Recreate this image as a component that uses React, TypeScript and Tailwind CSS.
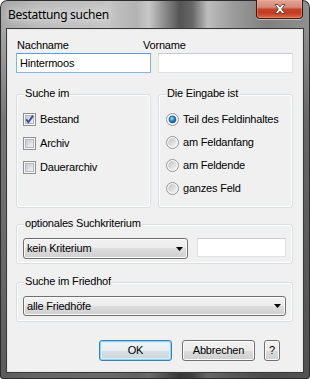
import React from "react";

function CheckBox({ checked }: { checked?: boolean }) {
  return (
    <svg width="13" height="13" viewBox="0 0 13 13" className="shrink-0">
      <defs>
        <linearGradient id="cbInner" x1="0" y1="0" x2="1" y2="1">
          <stop offset="0" stopColor="#c3c7cd" />
          <stop offset="1" stopColor="#f4f4f4" />
        </linearGradient>
      </defs>
      <rect x="0.5" y="0.5" width="12" height="12" fill="#f7f7f7" stroke="#8e8f8f" />
      <rect x="2.5" y="2.5" width="8" height="8" fill="url(#cbInner)" stroke="#b3b8be" />
      {checked && (
        <path d="M3.2 6.2 L5.4 9.2 L10 2.6" stroke="#34509c" strokeWidth="1.9" fill="none" strokeLinejoin="round" />
      )}
    </svg>
  );
}

function Radio({ checked }: { checked?: boolean }) {
  return (
    <svg width="13" height="13" viewBox="0 0 13 13" className="shrink-0">
      <defs>
        <linearGradient id="rbInner" x1="0" y1="0" x2="1" y2="1">
          <stop offset="0" stopColor="#bfc2c6" />
          <stop offset="1" stopColor="#f6f6f6" />
        </linearGradient>
        <radialGradient id="rbDot" cx="0.4" cy="0.35" r="0.75">
          <stop offset="0" stopColor="#a8e4ff" />
          <stop offset="0.45" stopColor="#2b8ad3" />
          <stop offset="1" stopColor="#0f477f" />
        </radialGradient>
      </defs>
      <circle cx="6.5" cy="6.5" r="6" fill="#f8f8f8" stroke="#959595" />
      <circle cx="6.5" cy="6.5" r="4.4" fill="url(#rbInner)" />
      {checked && <circle cx="6.5" cy="6.5" r="3.4" fill="url(#rbDot)" stroke="#1d4f86" strokeWidth="0.6" />}
    </svg>
  );
}

function Arrow() {
  return (
    <svg width="7" height="4" viewBox="0 0 7 4" className="shrink-0">
      <path d="M0 0 H7 L3.5 4 Z" fill="#000" />
    </svg>
  );
}

function Group({ label, className, children }: { label: string; className: string; children?: React.ReactNode }) {
  return (
    <div className={"relative rounded-[3px] border border-[#d5dfe5] shadow-[inset_0_0_0_1px_#ffffff] " + className}>
      <span className="absolute left-[7px] top-[-8px] px-[1px] bg-[#f0f0f0] leading-[13px] whitespace-nowrap">{label}</span>
      {children}
    </div>
  );
}

export default function App() {
  return (
    <div className="w-[310px] h-[379px] overflow-hidden rounded-t-[7px] rounded-b-[3px] flex flex-col text-[11px] leading-[13px] text-black font-['Liberation_Sans',Arial,sans-serif] shadow-[inset_0_0_0_1px_#2c2c2c] bg-[linear-gradient(180deg,rgba(0,0,0,0)_0px,rgba(0,0,0,0)_30px,rgba(30,30,30,0.35)_120px,rgba(30,30,30,0.55)_100%),linear-gradient(90deg,#a4a4a4_0%,#bababa_12%,#c4c4c4_35%,#b2b2b2_44%,#c8c8c8_48%,#8c8c8c_53%,#555555_58%,#666666_62%,#bdbdbd_67%,#9c9c9c_75%,#808080_86%,#8f8f8f_100%)]">
      {/* title bar */}
      <div className="h-[30px] shrink-0 flex items-start pl-[8px] pr-[7px]">
        <span className="mt-[6px] leading-[18px] text-[12px] tracking-[-0.3px] font-['Noto_Sans',sans-serif] text-black [text-shadow:0_0_8px_rgba(255,255,255,0.95),0_0_14px_rgba(255,255,255,0.85)]">
          Bestattung suchen
        </span>
        <div className="ml-auto w-[47px] h-[19px] rounded-b-[4px] border border-t-0 border-[#3b1810] shadow-[0_1px_0_rgba(255,255,255,0.45),inset_0_0_0_1px_rgba(255,190,170,0.35)] bg-[linear-gradient(180deg,#e2a595_0%,#d58a77_40%,#c1432a_52%,#c23b22_72%,#dd6a44_100%)] flex items-center justify-center">
          <svg width="12" height="10" viewBox="0 0 12 10">
            <path
              d="M1 0.5 H4 L6 3 L8 0.5 H11 L7.6 5 L11 9.5 H8 L6 7 L4 9.5 H1 L4.4 5 Z"
              fill="#ffffff"
              stroke="#5a2a20"
              strokeWidth="0.8"
              strokeLinejoin="round"
            />
          </svg>
        </div>
      </div>

      {/* client area */}
      <div className="ml-[8px] w-[294px] h-[341px] shrink-0 bg-[#f0f0f0] tracking-[-0.2px] shadow-[0_0_0_1px_#e6e6e6,0_0_0_2px_#3a3a3a] flex flex-col pl-[8px] pr-[9px] pt-[9px]">
        <div className="flex h-[13px]">
          <span className="w-[127px] pl-[1px]">Nachname</span>
          <span>Vorname</span>
        </div>
        <div className="mt-[1px] flex gap-[7px]">
          <div className="w-[135px] h-[20px] border border-[#7eb4ea] border-t-[#569de5] bg-white flex items-center pl-[3px]">
            Hintermoos
          </div>
          <div className="w-[135px] h-[20px] border border-[#dde2e8] border-t-[#c9ccd2] bg-white" />
        </div>

        <div className="mt-[21px] flex gap-[7px]">
          <Group label="Suche im" className="w-[135px] h-[114px] flex flex-col pt-[18px] pl-[6px] gap-[11px]">
            <div className="flex items-center h-[13px] gap-[4px]">
              <CheckBox checked />
              <span>Bestand</span>
            </div>
            <div className="flex items-center h-[13px] gap-[4px]">
              <CheckBox />
              <span>Archiv</span>
            </div>
            <div className="flex items-center h-[13px] gap-[4px]">
              <CheckBox />
              <span>Dauerarchiv</span>
            </div>
          </Group>
          <Group label="Die Eingabe ist" className="w-[135px] h-[114px] flex flex-col pt-[18px] pl-[7px] gap-[10px]">
            <div className="flex items-center h-[13px] gap-[4px]">
              <Radio checked />
              <span>Teil des Feldinhaltes</span>
            </div>
            <div className="flex items-center h-[13px] gap-[4px]">
              <Radio />
              <span>am Feldanfang</span>
            </div>
            <div className="flex items-center h-[13px] gap-[4px]">
              <Radio />
              <span>am Feldende</span>
            </div>
            <div className="flex items-center h-[13px] gap-[4px]">
              <Radio />
              <span>ganzes Feld</span>
            </div>
          </Group>
        </div>

        <Group label="optionales Suchkriterium" className="mt-[16px] h-[40px] flex items-start pt-[13px] pl-[6px] gap-[9px]">
          <div className="w-[165px] h-[21px] rounded-[3px] border border-[#707070] shadow-[inset_0_0_0_1px_#fbfbfb] bg-[linear-gradient(180deg,#f2f2f2_0%,#ebebeb_50%,#dddddd_50%,#cfcfcf_100%)] flex items-center pl-[3px] pr-[4px]">
            <span className="flex-1">kein Kriterium</span>
            <Arrow />
          </div>
          <div className="w-[89px] h-[19px] border border-[#dde2e8] border-t-[#c9ccd2] bg-white" />
        </Group>

        <Group label="Suche im Friedhof" className="mt-[18px] h-[40px] flex items-start pt-[13px] pl-[6px]">
          <div className="w-[263px] h-[20px] rounded-[3px] border border-[#707070] shadow-[inset_0_0_0_1px_#fbfbfb] bg-[linear-gradient(180deg,#f2f2f2_0%,#ebebeb_50%,#dddddd_50%,#cfcfcf_100%)] flex items-center pl-[3px] pr-[4px]">
            <span className="flex-1">alle Friedhöfe</span>
            <Arrow />
          </div>
        </Group>

        <div className="mt-[18px] flex justify-end pr-[13px]">
          <div className="w-[73px] h-[21px] rounded-[3px] border border-[#3c7fb1] shadow-[inset_0_0_0_1px_#8fd3f5,inset_0_0_0_2px_#d6f1fc] bg-[linear-gradient(180deg,#f0f4f6_0%,#e8eef1_50%,#d8e0e5_50%,#cbd4da_100%)] flex items-center justify-center">
            OK
          </div>
          <div className="ml-[10px] w-[73px] h-[21px] rounded-[3px] border border-[#707070] shadow-[inset_0_0_0_1px_#fbfbfb] bg-[linear-gradient(180deg,#f2f2f2_0%,#ebebeb_50%,#dddddd_50%,#cfcfcf_100%)] flex items-center justify-center">
            Abbrechen
          </div>
          <div className="ml-[9px] w-[16px] h-[21px] rounded-[3px] border border-[#707070] shadow-[inset_0_0_0_1px_#fbfbfb] bg-[linear-gradient(180deg,#f2f2f2_0%,#ebebeb_50%,#dddddd_50%,#cfcfcf_100%)] flex items-center justify-center">
            ?
          </div>
        </div>
      </div>
    </div>
  );
}
